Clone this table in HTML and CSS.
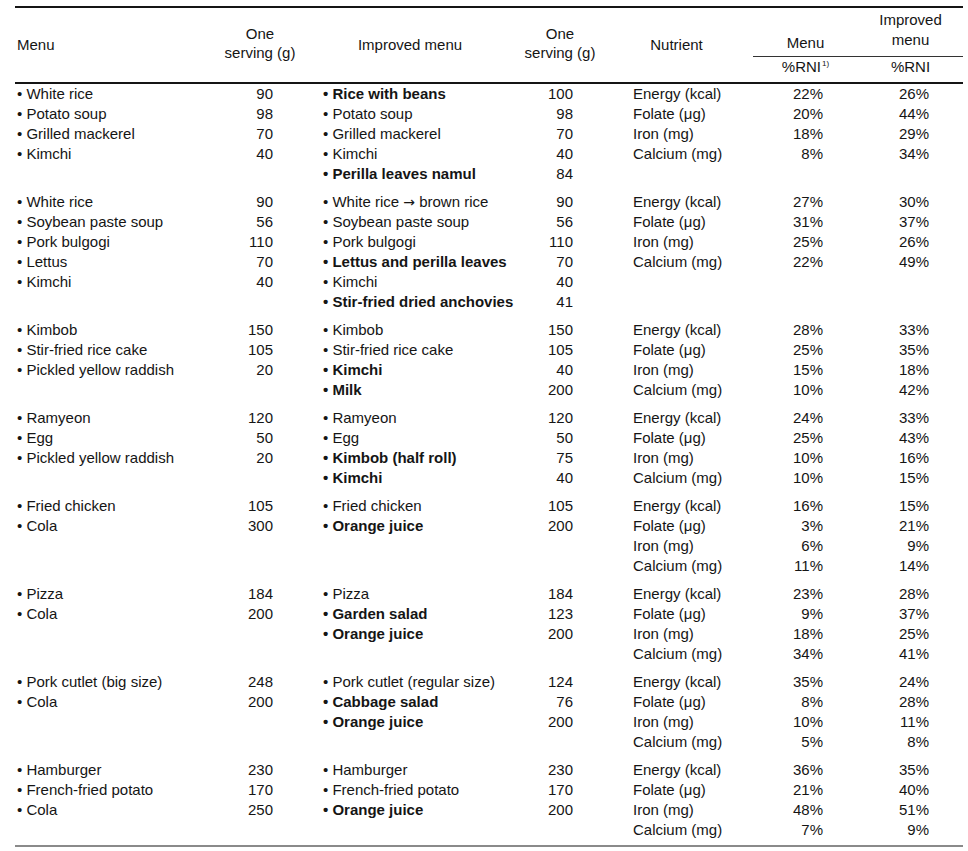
FILE: index.html
```html
<!DOCTYPE html>
<html>
<head>
<meta charset="utf-8">
<link rel="stylesheet" href="styles.css">
</head>
<body>
<table class="t">
<colgroup>
<col class="w-menu"><col class="w-srv"><col class="w-imp"><col class="w-srv"><col class="w-nut"><col class="w-rni"><col class="w-rni">
</colgroup>
<thead>
<tr class="h1">
<th rowspan="2" class="hl">Menu</th>
<th rowspan="2" class="hs">One<br>serving (g)</th>
<th rowspan="2">Improved menu</th>
<th rowspan="2" class="hs">One<br>serving (g)</th>
<th rowspan="2">Nutrient</th>
<th class="sub sub-a">Menu</th>
<th class="sub">Improved<br>menu</th>
</tr>
<tr class="h2">
<th>%RNI<sup>1)</sup></th>
<th>%RNI</th>
</tr>
</thead>
<tbody>
<tr><td class="m">• White rice</td><td class="n">90</td><td class="i b">• Rice with beans</td><td class="n">100</td><td class="u">Energy (kcal)</td><td class="r1">22%</td><td class="r2">26%</td></tr>
<tr><td class="m">• Potato soup</td><td class="n">98</td><td class="i">• Potato soup</td><td class="n">98</td><td class="u">Folate (μg)</td><td class="r1">20%</td><td class="r2">44%</td></tr>
<tr><td class="m">• Grilled mackerel</td><td class="n">70</td><td class="i">• Grilled mackerel</td><td class="n">70</td><td class="u">Iron (mg)</td><td class="r1">18%</td><td class="r2">29%</td></tr>
<tr><td class="m">• Kimchi</td><td class="n">40</td><td class="i">• Kimchi</td><td class="n">40</td><td class="u">Calcium (mg)</td><td class="r1">8%</td><td class="r2">34%</td></tr>
<tr><td class="m"></td><td class="n"></td><td class="i b">• Perilla leaves namul</td><td class="n">84</td><td class="u"></td><td class="r1"></td><td class="r2"></td></tr>

<tr class="g"><td class="m">• White rice</td><td class="n">90</td><td class="i">• White rice <span class="arr">→</span> brown rice</td><td class="n">90</td><td class="u">Energy (kcal)</td><td class="r1">27%</td><td class="r2">30%</td></tr>
<tr><td class="m">• Soybean paste soup</td><td class="n">56</td><td class="i">• Soybean paste soup</td><td class="n">56</td><td class="u">Folate (μg)</td><td class="r1">31%</td><td class="r2">37%</td></tr>
<tr><td class="m">• Pork bulgogi</td><td class="n">110</td><td class="i">• Pork bulgogi</td><td class="n">110</td><td class="u">Iron (mg)</td><td class="r1">25%</td><td class="r2">26%</td></tr>
<tr><td class="m">• Lettus</td><td class="n">70</td><td class="i b">• Lettus and perilla leaves</td><td class="n">70</td><td class="u">Calcium (mg)</td><td class="r1">22%</td><td class="r2">49%</td></tr>
<tr><td class="m">• Kimchi</td><td class="n">40</td><td class="i">• Kimchi</td><td class="n">40</td><td class="u"></td><td class="r1"></td><td class="r2"></td></tr>
<tr><td class="m"></td><td class="n"></td><td class="i b">• Stir-fried dried anchovies</td><td class="n">41</td><td class="u"></td><td class="r1"></td><td class="r2"></td></tr>

<tr class="g"><td class="m">• Kimbob</td><td class="n">150</td><td class="i">• Kimbob</td><td class="n">150</td><td class="u">Energy (kcal)</td><td class="r1">28%</td><td class="r2">33%</td></tr>
<tr><td class="m">• Stir-fried rice cake</td><td class="n">105</td><td class="i">• Stir-fried rice cake</td><td class="n">105</td><td class="u">Folate (μg)</td><td class="r1">25%</td><td class="r2">35%</td></tr>
<tr><td class="m">• Pickled yellow raddish</td><td class="n">20</td><td class="i b">• Kimchi</td><td class="n">40</td><td class="u">Iron (mg)</td><td class="r1">15%</td><td class="r2">18%</td></tr>
<tr><td class="m"></td><td class="n"></td><td class="i b">• Milk</td><td class="n">200</td><td class="u">Calcium (mg)</td><td class="r1">10%</td><td class="r2">42%</td></tr>

<tr class="g"><td class="m">• Ramyeon</td><td class="n">120</td><td class="i">• Ramyeon</td><td class="n">120</td><td class="u">Energy (kcal)</td><td class="r1">24%</td><td class="r2">33%</td></tr>
<tr><td class="m">• Egg</td><td class="n">50</td><td class="i">• Egg</td><td class="n">50</td><td class="u">Folate (μg)</td><td class="r1">25%</td><td class="r2">43%</td></tr>
<tr><td class="m">• Pickled yellow raddish</td><td class="n">20</td><td class="i b">• Kimbob (half roll)</td><td class="n">75</td><td class="u">Iron (mg)</td><td class="r1">10%</td><td class="r2">16%</td></tr>
<tr><td class="m"></td><td class="n"></td><td class="i b">• Kimchi</td><td class="n">40</td><td class="u">Calcium (mg)</td><td class="r1">10%</td><td class="r2">15%</td></tr>

<tr class="g"><td class="m">• Fried chicken</td><td class="n">105</td><td class="i">• Fried chicken</td><td class="n">105</td><td class="u">Energy (kcal)</td><td class="r1">16%</td><td class="r2">15%</td></tr>
<tr><td class="m">• Cola</td><td class="n">300</td><td class="i b">• Orange juice</td><td class="n">200</td><td class="u">Folate (μg)</td><td class="r1">3%</td><td class="r2">21%</td></tr>
<tr><td class="m"></td><td class="n"></td><td class="i"></td><td class="n"></td><td class="u">Iron (mg)</td><td class="r1">6%</td><td class="r2">9%</td></tr>
<tr><td class="m"></td><td class="n"></td><td class="i"></td><td class="n"></td><td class="u">Calcium (mg)</td><td class="r1">11%</td><td class="r2">14%</td></tr>

<tr class="g"><td class="m">• Pizza</td><td class="n">184</td><td class="i">• Pizza</td><td class="n">184</td><td class="u">Energy (kcal)</td><td class="r1">23%</td><td class="r2">28%</td></tr>
<tr><td class="m">• Cola</td><td class="n">200</td><td class="i b">• Garden salad</td><td class="n">123</td><td class="u">Folate (μg)</td><td class="r1">9%</td><td class="r2">37%</td></tr>
<tr><td class="m"></td><td class="n"></td><td class="i b">• Orange juice</td><td class="n">200</td><td class="u">Iron (mg)</td><td class="r1">18%</td><td class="r2">25%</td></tr>
<tr><td class="m"></td><td class="n"></td><td class="i"></td><td class="n"></td><td class="u">Calcium (mg)</td><td class="r1">34%</td><td class="r2">41%</td></tr>

<tr class="g"><td class="m">• Pork cutlet (big size)</td><td class="n">248</td><td class="i">• Pork cutlet (regular size)</td><td class="n">124</td><td class="u">Energy (kcal)</td><td class="r1">35%</td><td class="r2">24%</td></tr>
<tr><td class="m">• Cola</td><td class="n">200</td><td class="i b">• Cabbage salad</td><td class="n">76</td><td class="u">Folate (μg)</td><td class="r1">8%</td><td class="r2">28%</td></tr>
<tr><td class="m"></td><td class="n"></td><td class="i b">• Orange juice</td><td class="n">200</td><td class="u">Iron (mg)</td><td class="r1">10%</td><td class="r2">11%</td></tr>
<tr><td class="m"></td><td class="n"></td><td class="i"></td><td class="n"></td><td class="u">Calcium (mg)</td><td class="r1">5%</td><td class="r2">8%</td></tr>

<tr class="g"><td class="m">• Hamburger</td><td class="n">230</td><td class="i">• Hamburger</td><td class="n">230</td><td class="u">Energy (kcal)</td><td class="r1">36%</td><td class="r2">35%</td></tr>
<tr><td class="m">• French-fried potato</td><td class="n">170</td><td class="i">• French-fried potato</td><td class="n">170</td><td class="u">Folate (μg)</td><td class="r1">21%</td><td class="r2">40%</td></tr>
<tr><td class="m">• Cola</td><td class="n">250</td><td class="i b">• Orange juice</td><td class="n">200</td><td class="u">Iron (mg)</td><td class="r1">48%</td><td class="r2">51%</td></tr>
<tr class="last"><td class="m"></td><td class="n"></td><td class="i"></td><td class="n"></td><td class="u">Calcium (mg)</td><td class="r1">7%</td><td class="r2">9%</td></tr>
</tbody>
</table>
</body>
</html>
```

FILE: styles.css
```css
html, body {
  margin: 0;
  padding: 0;
  background: #fff;
}
body {
  font-family: "Liberation Sans", Arial, sans-serif;
  font-size: 15px;
  color: #151515;
}
.t {
  margin: 6px 0 0 15px;
  width: 948px;
  table-layout: fixed;
  border-collapse: separate;
  border-spacing: 0;
  border-top: 2px solid #151515;
  border-bottom: 2px solid #8a8a8a;
}
.w-menu { width: 205px; }
.w-srv { width: 80px; }
.w-imp { width: 220px; }
.w-nut { width: 153px; }
.w-rni { width: 105px; }

th {
  font-weight: normal;
  padding: 0 0 2px;
  line-height: 19px;
  text-align: center;
  vertical-align: middle;
  border-bottom: 2px solid #151515;
}
th.hl {
  text-align: left;
  padding-left: 2px;
}
th.hs {
  padding-bottom: 5px;
}
.h1 th.sub {
  vertical-align: bottom;
  height: 47px;
  box-sizing: border-box;
  padding: 2px 0 6px;
  line-height: 20px;
  border-bottom: 1px solid #333;
}
.h1 th.sub-a {
  padding-bottom: 3px;
}
.h2 th {
  height: 27px;
  box-sizing: border-box;
  padding: 0 0 5px;
  vertical-align: bottom;
  line-height: 20px;
}
sup {
  font-size: 8px;
  line-height: 0;
  vertical-align: 6px;
  margin-left: 1px;
}
td {
  padding: 0;
  height: 20px;
  line-height: 20px;
  white-space: nowrap;
  vertical-align: middle;
}
tr.g td {
  padding-top: 8px;
}
tr.last td {
  padding-bottom: 5px;
}
td.m { padding-left: 2px; }
td.n { text-align: right; padding-right: 27px; }
td.i { padding-left: 23px; }
td.b { font-weight: bold; }
td.u { padding-left: 33px; }
td.r1 { text-align: right; padding-right: 35px; }
td.r2 { text-align: right; padding-right: 34px; }
.arr {
  font-family: "DejaVu Sans", sans-serif;
  font-size: 14px;
}
```
